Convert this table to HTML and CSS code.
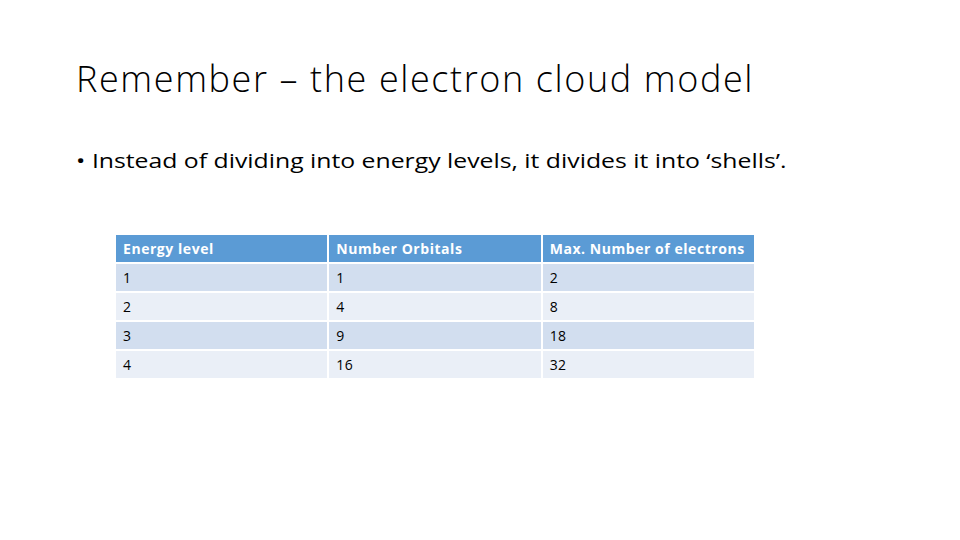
FILE: index.html
```html
<!DOCTYPE html>
<html lang="en">
<head>
<meta charset="utf-8">
<title>Remember – the electron cloud model</title>
<link rel="stylesheet" href="styles.css">
</head>
<body>
<main class="slide">
  <h1 class="title">Remember – the electron cloud model</h1>
  <ul class="bullets">
    <li>Instead of dividing into energy levels, it divides it into ‘shells’.</li>
  </ul>
  <div class="table">
    <div class="cell head">Energy level</div>
    <div class="cell head">Number Orbitals</div>
    <div class="cell head">Max. Number of electrons</div>
    <div class="cell odd">1</div>
    <div class="cell odd">1</div>
    <div class="cell odd">2</div>
    <div class="cell even">2</div>
    <div class="cell even">4</div>
    <div class="cell even">8</div>
    <div class="cell odd">3</div>
    <div class="cell odd">9</div>
    <div class="cell odd">18</div>
    <div class="cell even">4</div>
    <div class="cell even">16</div>
    <div class="cell even">32</div>
  </div>
</main>
</body>
</html>
```
FILE: styles.css
```css
html, body {
  margin: 0;
  padding: 0;
  background: #ffffff;
}
.slide {
  width: 960px;
  height: 540px;
  box-sizing: border-box;
  padding: 57px 0 0 76px;
  font-family: "Open Sans", Lato, sans-serif;
  color: #000000;
  overflow: hidden;
}
.title {
  margin: 0;
  font-weight: 300;
  font-size: 36px;
  line-height: 44px;
  letter-spacing: 1.6px;
}
.bullets {
  list-style: none;
  margin: 46px 0 0 0;
  padding: 0;
  font-size: 19.5px;
  line-height: 28px;
}
.bullets li {
  display: flex;
  width: max-content;
  transform: scaleX(1.27);
  transform-origin: left center;
}
.bullets li::before {
  content: "•";
  width: 12.5px;
  flex: none;
}
.table {
  margin: 60px 0 0 40px;
  width: 638px;
  display: grid;
  grid-template-columns: 1fr 1fr 1fr;
  grid-template-rows: 27px 27px 27px 27px 27px;
  gap: 2px;
  font-size: 14px;
}
.cell {
  display: flex;
  align-items: center;
  padding: 0 7px;
  letter-spacing: 0.3px;
}
.head {
  background: #5b9bd5;
  color: #ffffff;
  font-weight: 700;
  letter-spacing: 0.55px;
}
.odd {
  background: #d2deef;
}
.even {
  background: #eaeff7;
}
```
